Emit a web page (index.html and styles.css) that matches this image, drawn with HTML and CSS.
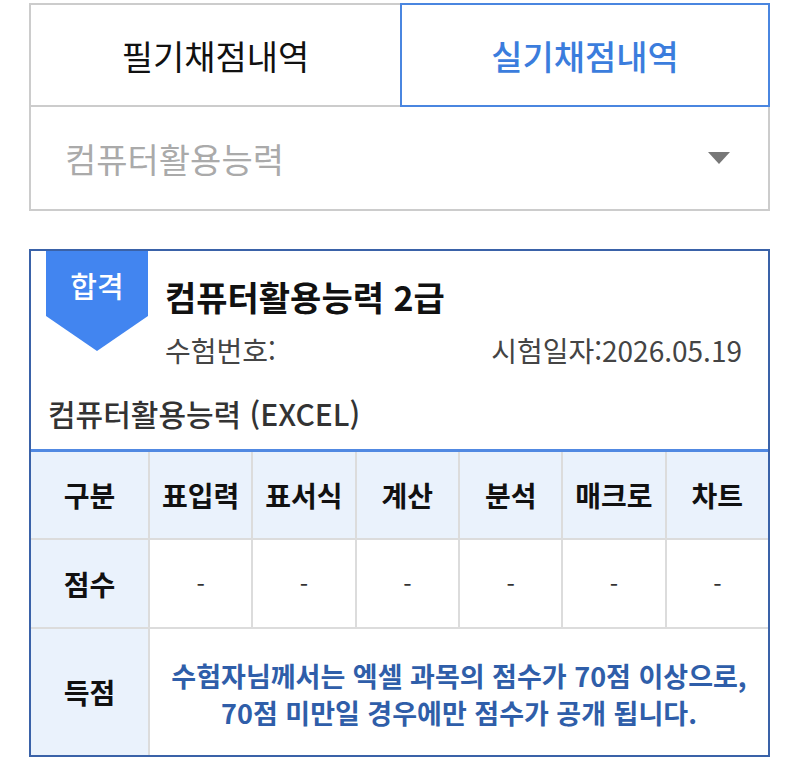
FILE: index.html
```html
<!DOCTYPE html>
<html lang="ko">
<head>
    <meta charset="UTF-8">
    <meta name="viewport" content="width=device-width, initial-scale=1.0">
    <title>실기채점내역</title>
    <link rel="stylesheet" href="styles.css">
</head>
<body>
    <div class="w">
        <div class="tabs">
            <div class="tab">필기채점내역</div>
            <div class="tab on">실기채점내역</div>
        </div>
        <div class="select">
            <span>컴퓨터활용능력</span>
            <i class="arrow"></i>
        </div>

        <div class="card">
            <div class="head">
                <div class="badge">합격</div>
                <div class="info">
                    <h2 class="title">컴퓨터활용능력 2급</h2>
                    <div class="meta">
                        <span>수험번호:</span>
                        <span>시험일자:2026.05.19</span>
                    </div>
                </div>
            </div>
            <p class="subject">컴퓨터활용능력 (EXCEL)</p>
            <div class="score">
                <div class="th">구분</div>
                <div class="th">표입력</div>
                <div class="th">표서식</div>
                <div class="th">계산</div>
                <div class="th">분석</div>
                <div class="th">매크로</div>
                <div class="th">차트</div>

                <div class="th">점수</div>
                <div class="td">-</div>
                <div class="td">-</div>
                <div class="td">-</div>
                <div class="td">-</div>
                <div class="td">-</div>
                <div class="td">-</div>

                <div class="th">득점</div>
                <div class="td notice">수험자님께서는 엑셀 과목의 점수가 70점 이상으로,<br>70점 미만일 경우에만 점수가 공개 됩니다.</div>
            </div>
        </div>
    </div>
</body>
</html>
```

FILE: styles.css
```css
* {
    margin: 0;
    padding: 0;
    box-sizing: border-box;
}

body {
    background: #fff;
    font-family: "Noto Sans CJK KR", "Noto Sans", sans-serif;
    color: #111;
}

.w {
    width: 741px;
    margin: 3px 0 0 29px;
}

.tabs {
    display: grid;
    grid-template-columns: 371px 1fr;
    height: 104px;
}

.tab {
    display: flex;
    align-items: center;
    justify-content: center;
    font-size: 34px;
    font-weight: 400;
    border: 2px solid #ccc;
    border-right: none;
}

.tab.on {
    border: 2px solid #4a86e0;
    color: #3b7ddd;
    font-weight: 500;
}

.select {
    display: flex;
    align-items: center;
    justify-content: space-between;
    height: 104px;
    padding: 0 38px 0 34px;
    border: 2px solid #ccc;
    border-top: none;
    font-size: 34px;
    color: #aaa;
}

.select .arrow {
    width: 0;
    height: 0;
    border-left: 11px solid transparent;
    border-right: 11px solid transparent;
    border-top: 12px solid #777;
}

.card {
    margin-top: 38px;
    border: 2px solid #3a62a8;
}

.head {
    display: flex;
    align-items: flex-start;
    padding: 0 26px 0 15px;
}

.badge {
    width: 102px;
    height: 100px;
    flex-shrink: 0;
    background: #4285f0;
    color: #fff;
    font-size: 29px;
    font-weight: 500;
    line-height: 40px;
    text-align: center;
    padding-top: 14px;
    clip-path: polygon(0 0, 100% 0, 100% 65%, 50% 100%, 0 65%);
}

.info {
    flex: 1;
    padding: 24px 0 0 17px;
}

.title {
    font-size: 34px;
    font-weight: 700;
    line-height: 44px;
}

.meta {
    display: flex;
    justify-content: space-between;
    margin-top: 13px;
    font-size: 28px;
    line-height: 36px;
    color: #444;
}

.subject {
    padding: 25px 0 16px 17px;
    font-size: 30px;
    font-weight: 500;
    line-height: 40px;
    color: #333;
}

.score {
    display: grid;
    grid-template-columns: 117px repeat(6, 1fr);
    grid-template-rows: 86px 87px 126px;
    gap: 2px;
    background: #dcdcdc;
    border-top: 3px solid #5189e2;
}

.score .th,
.score .td {
    display: flex;
    align-items: center;
    justify-content: center;
    background: #fff;
}

.score .th {
    background: #eaf2fc;
    font-size: 28px;
    font-weight: 700;
}

.score .td {
    font-size: 24px;
    color: #333;
}

.score .notice {
    grid-column: 2 / 8;
    text-align: center;
    font-size: 27px;
    font-weight: 700;
    line-height: 37px;
    padding-top: 4px;
    color: #2f5ea9;
}
```
